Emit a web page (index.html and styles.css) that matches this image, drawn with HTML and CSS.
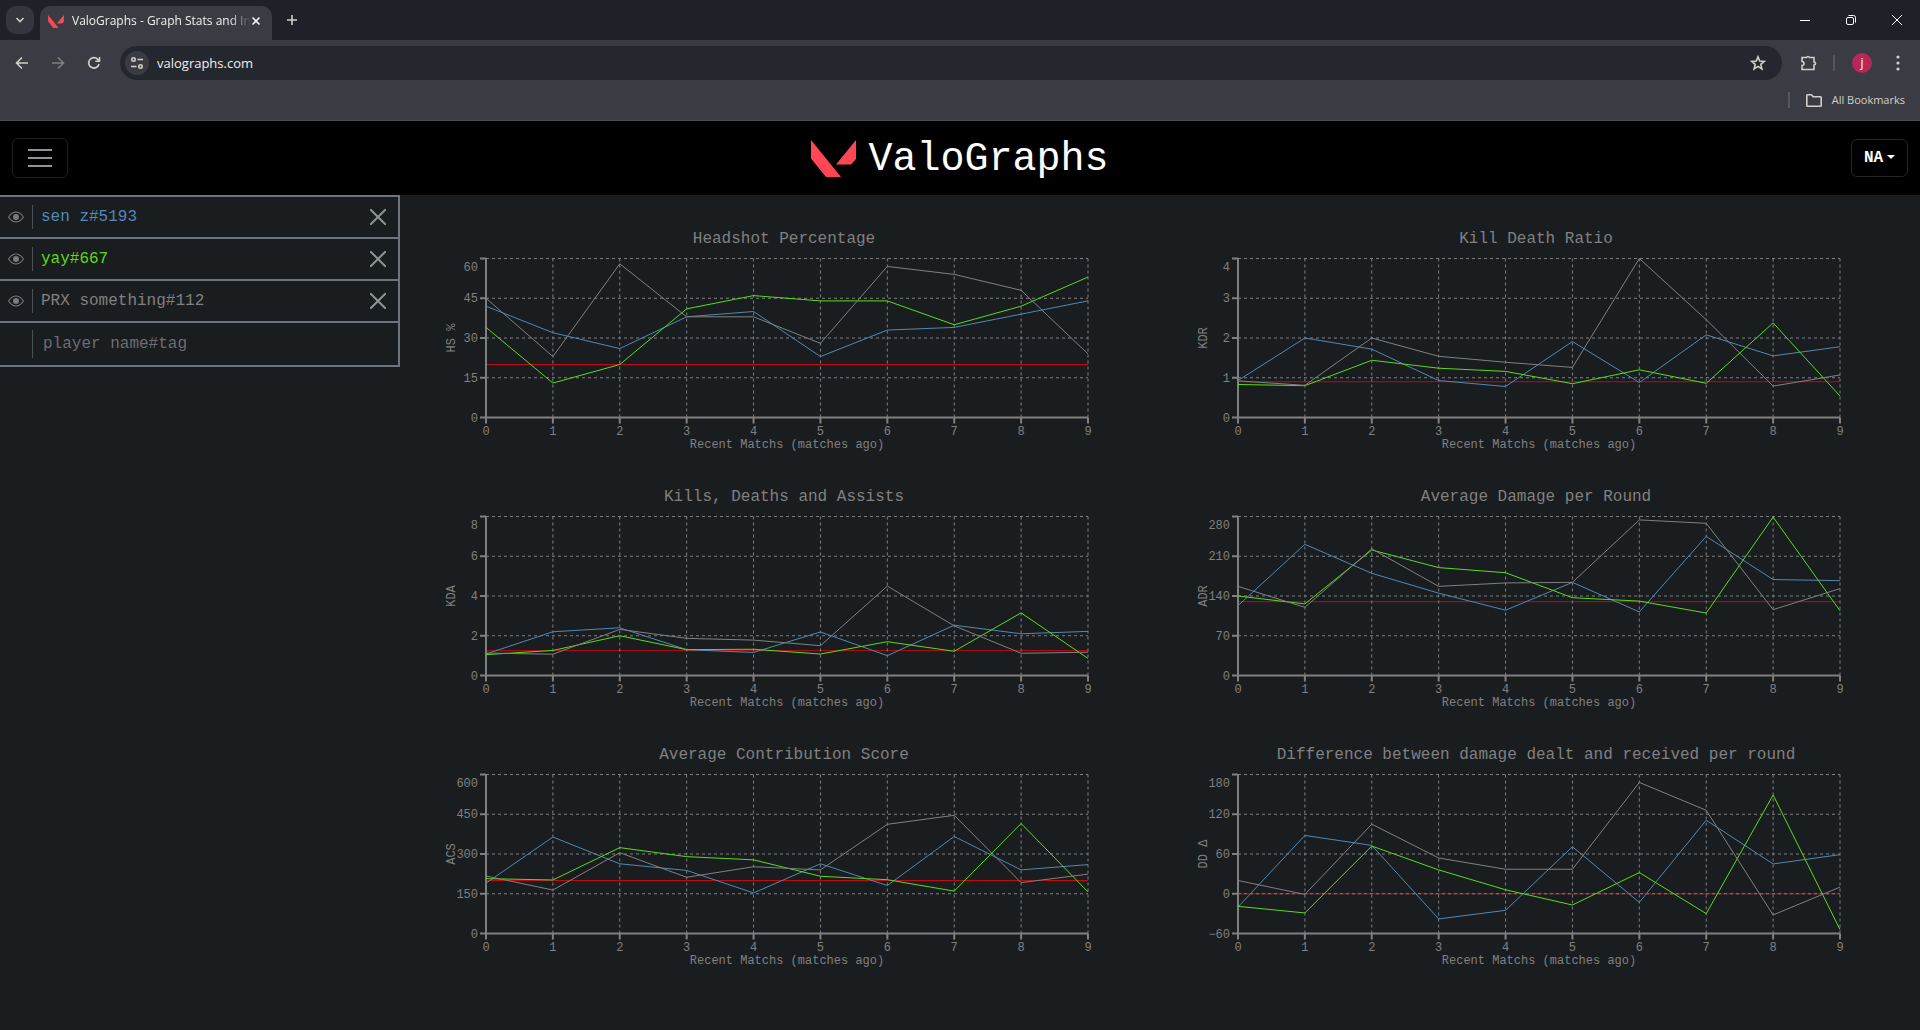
FILE: index.html
```html
<!DOCTYPE html>
<html lang="en">
<head>
<meta charset="utf-8">
<title>ValoGraphs - Graph Stats and Insights</title>
<link rel="stylesheet" href="styles.css">
</head>
<body>
<div class="browser">
  <div class="tabstrip">
    <button class="tab-search" aria-label="Search tabs"><svg width="10" height="6" viewBox="0 0 10 6"><path d="M1.5 1l3.5 3.500 3.500-3.500" class="line"/></svg></button>
    <div class="tab">
      <svg width="16" height="13" viewBox="0 0 45 37" class="mark"><path d="M0 0L30 37H15L0 18.500zM45 0V19L40 24.500H25z"/></svg>
      <span class="tab-title">ValoGraphs - Graph Stats and In</span>
      <button class="bare close" aria-label="Close tab"><svg width="10" height="10" viewBox="0 0 10 10"><path d="M1.500 1.500l7 7M8.500 1.500l-7 7" class="line"/></svg></button>
    </div>
    <button class="bare new-tab" aria-label="New tab"><svg width="12" height="12" viewBox="0 0 12 12"><path d="M6 1v10M1 6h10" class="line"/></svg></button>
    <div class="window-buttons">
      <button class="bare" aria-label="Minimize"><svg width="10" height="10" viewBox="0 0 10 10"><path d="M0 5.500h10" class="hair"/></svg></button>
      <button class="bare" aria-label="Restore"><svg width="10" height="10" viewBox="0 0 10 10"><rect x=".5" y="2.500" width="7" height="7" rx="1.500" class="hair"/><path d="M2.500.5H7.500a2 2 0 0 1 2 2V7.500" class="hair"/></svg></button>
      <button class="bare" aria-label="Close"><svg width="10" height="10" viewBox="0 0 10 10"><path d="M0 0l10 10M10 0L0 10" class="hair"/></svg></button>
    </div>
  </div>
  <div class="toolbar">
    <button class="bare" aria-label="Back"><svg width="14" height="14" viewBox="0 0 14 14"><path d="M13 7H2M7 1.500L1.500 7 7 12.500" class="line"/></svg></button>
    <button class="bare dim" aria-label="Forward"><svg width="14" height="14" viewBox="0 0 14 14"><path d="M1 7h11M7 1.500L12.500 7 7 12.500" class="line"/></svg></button>
    <button class="bare" aria-label="Reload"><svg width="14" height="14" viewBox="0 0 14 14"><path d="M12 8a5.200 5.200 0 1 1-1.200-4.600L12.500 5M12.500 1v4.200H8.300" class="line"/></svg></button>
    <div class="omnibox">
      <button class="site-info" aria-label="Site information"><svg width="14" height="14" viewBox="0 0 14 14"><circle cx="3.500" cy="3.500" r="1.700" class="line"/><path d="M7.500 3.500H13M1 10.500h5.500" class="line"/><circle cx="10.500" cy="10.500" r="1.700" class="line"/></svg></button>
      <input class="url" aria-label="Address" value="valographs.com">
      <button class="bare" aria-label="Bookmark"><svg width="16" height="16" viewBox="0 0 16 16"><path d="M8 1.800l1.700 4.300 4.600.3-3.500 3 1.100 4.500L8 11.400l-3.900 2.500 1.100-4.500-3.500-3 4.600-.3z" class="line"/></svg></button>
    </div>
    <button class="bare ext" aria-label="Extensions"><svg width="18" height="18" viewBox="0 0 18 18"><path d="M2 3.500h4.500a1.600 1.600 0 0 1 3 0H14V8a1.500 1.500 0 0 1 0 3v4.500H2V11.500a2 2 0 0 0 0-4z" class="line"/></svg></button>
    <span class="bar"></span>
    <button class="avatar" aria-label="Profile">j</button>
    <button class="bare" aria-label="Menu"><svg width="4" height="16" viewBox="0 0 4 16" class="dots"><circle cx="2" cy="2" r="1.600"/><circle cx="2" cy="8" r="1.600"/><circle cx="2" cy="14" r="1.600"/></svg></button>
  </div>
  <div class="bookmarks">
    <span class="bar"></span>
    <button class="bare all-bookmarks"><svg width="16" height="13" viewBox="0 0 16 13"><path d="M.8 11.500V1.500q0-.7.7-.7H5.500L7.200 2.800h7.300q.7 0 .7.700v8q0 .7-.7.700H1.500q-.7 0-.7-.7z" class="line"/></svg>All Bookmarks</button>
  </div>
</div>

<header class="navbar">
  <button class="toggler" aria-label="Toggle navigation"><svg width="30" height="30" viewBox="0 0 30 30"><path d="M3 7h24M3 15h24M3 23h24"/></svg></button>
  <a class="brand" href="#"><svg width="45" height="37" viewBox="0 0 45 37" class="mark"><path d="M0 0L30 37H15L0 18.500zM45 0V19L40 24.500H25z"/></svg><span>ValoGraphs</span></a>
  <button class="region">NA<span class="caret"></span></button>
</header>

<svg class="defs" width="0" height="0">
  <symbol id="eye" viewBox="0 0 16 16"><path d="M16 8s-3-5.500-8-5.500S0 8 0 8s3 5.500 8 5.500S16 8 16 8M1.173 8a13 13 0 0 1 1.660-2.043C4.120 4.668 5.880 3.500 8 3.500s3.879 1.168 5.168 2.457A13 13 0 0 1 14.828 8q-.086.130-.195.288c-.335.480-.830 1.120-1.465 1.755C11.879 11.332 10.119 12.500 8 12.500s-3.879-1.168-5.168-2.457A13 13 0 0 1 1.172 8z"/><circle cx="8" cy="8" r="3"/></symbol>
  <symbol id="cross" viewBox="0 0 16 16"><path d="M0 0l16 16M16 0L0 16"/></symbol>
</svg>

<div class="layout">
  <aside class="players">
    <div class="player">
      <button class="bare" aria-label="Toggle sen z"><svg class="eye" width="16" height="16"><use href="#eye"/></svg></button>
      <span class="name blue">sen z#5193</span>
      <button class="bare" aria-label="Remove sen z"><svg class="cross" width="16" height="16"><use href="#cross"/></svg></button>
    </div>
    <div class="player">
      <button class="bare" aria-label="Toggle yay"><svg class="eye" width="16" height="16"><use href="#eye"/></svg></button>
      <span class="name green">yay#667</span>
      <button class="bare" aria-label="Remove yay"><svg class="cross" width="16" height="16"><use href="#cross"/></svg></button>
    </div>
    <div class="player">
      <button class="bare" aria-label="Toggle PRX something"><svg class="eye" width="16" height="16"><use href="#eye"/></svg></button>
      <span class="name grey">PRX something#112</span>
      <button class="bare" aria-label="Remove PRX something"><svg class="cross" width="16" height="16"><use href="#cross"/></svg></button>
    </div>
    <div class="player add">
      <input class="name" aria-label="Player name and tag" placeholder="player name#tag">
    </div>
  </aside>
  <main class="charts" id="charts"></main>
</div>
<script src="charts.js"></script>
</body>
</html>
```
FILE: styles.css
```css
* { box-sizing: border-box; }

body {
  margin: 0;
  min-height: 100vh;
  background: #1a1d20;
  color: #808080;
  font: 16px/24px "Courier New", "Liberation Mono", monospace;
}

button, input {
  margin: 0;
  padding: 0;
  border: 0;
  background: none;
  color: inherit;
  font: inherit;
  outline: none;
}

svg { display: block; flex-shrink: 0; }
.defs { position: absolute; }
.bare { display: flex; align-items: center; justify-content: center; }
.line { fill: none; stroke: currentColor; stroke-width: 1.6; }
.hair { fill: none; stroke: #fff; stroke-width: 1; }
.mark { fill: #ff4655; }
.dots { fill: currentColor; }

/* Browser window */
.browser {
  background: #3b3c43;
  border-bottom: 1px solid #4c4d50;
  color: #d3cfc8;
  font: 12px/16px "Segoe UI", "Open Sans", "Noto Sans", sans-serif;
}

.tabstrip {
  display: flex;
  align-items: center;
  height: 40px;
  padding-left: 6px;
  background: #1e2128;
}

.tab-search {
  display: flex;
  align-items: center;
  justify-content: center;
  width: 28px;
  height: 28px;
  border-radius: 10px;
  background: #35363d;
}

.tab {
  display: flex;
  align-items: center;
  gap: 8px;
  align-self: flex-end;
  width: 232px;
  height: 34px;
  margin-left: 6px;
  padding: 0 11px 4px 8px;
  border-radius: 10px 10px 0 0;
  background: #3b3c43;
  color: #f1efeb;
}

.tab-title {
  flex: 1;
  white-space: nowrap;
  mask-image: linear-gradient(to right, #000 88%, transparent);
}

.close { margin-left: -8px; }
.new-tab { margin-left: 14px; }
.window-buttons { display: flex; gap: 36px; margin-left: auto; padding-right: 18px; }

.toolbar {
  display: flex;
  align-items: center;
  gap: 22px;
  height: 46px;
  padding: 0 20px 0 15px;
}

.dim { opacity: .45; }

.omnibox {
  display: flex;
  flex: 1;
  align-items: center;
  height: 34px;
  margin-left: -3px;
  padding: 0 16px 0 5px;
  border-radius: 17px;
  background: #25272e;
}

.site-info {
  display: flex;
  align-items: center;
  justify-content: center;
  width: 24px;
  height: 24px;
  border-radius: 12px;
  background: #3b3c43;
}

.url { flex: 1; padding-left: 8px; color: #f1efeb; font-size: 13px; }
.ext { margin: 0 -2px 0 -4px; }
.toolbar .bar { margin: 0 -5px; }
.bar { width: 2px; height: 16px; background: #55565b; }

.avatar {
  width: 20px;
  height: 20px;
  margin-right: 2px;
  border-radius: 10px;
  background: #b8275a;
  color: #fff;
}

.bookmarks {
  display: flex;
  align-items: center;
  justify-content: flex-end;
  gap: 16px;
  height: 34px;
  padding: 0 15px 6px 0;
}

.all-bookmarks { gap: 10px; font-size: 11px; }

/* Site header */
.navbar {
  display: grid;
  grid-template-columns: 1fr auto 1fr;
  align-items: center;
  height: 74px;
  padding: 0 12px;
  background: #000;
}

.toggler {
  display: flex;
  align-items: center;
  justify-content: center;
  width: 56px;
  height: 40px;
  border: 1px solid #1c1e1f;
  border-radius: 6px;
}

.toggler path { stroke: #8b9595; stroke-width: 2; }

.brand {
  display: flex;
  align-items: center;
  gap: 12px;
  color: #fff;
  font-size: 40px;
  line-height: 48px;
  text-decoration: none;
}

.brand span { padding-top: 4px; }

.region {
  display: flex;
  align-items: center;
  justify-content: center;
  gap: 4px;
  justify-self: end;
  width: 57px;
  height: 38px;
  border: 1px solid #212529;
  border-radius: 6px;
  color: #fff;
  font-weight: bold;
}

.caret { margin-bottom: 2px; border: 4px solid transparent; border-top-color: #fff; border-bottom: 0; }

/* Player list and charts */
.layout { display: grid; grid-template-columns: 400px 1fr; align-items: start; }

.players { border: 2px solid #6c757d; border-left: 0; }

.player {
  display: flex;
  align-items: center;
  gap: 8px;
  height: 42px;
  padding: 0 12px 0 8px;
  border-bottom: 2px solid #6c757d;
}

.player.add { border-bottom: 0; padding-left: 32px; }
.name { flex: 1; height: 24px; padding-left: 8px; border-left: 1px solid #4b5053; }
.add .name { height: 28px; padding-left: 10px; }
.name::placeholder { color: #6a6e72; opacity: 1; }
.eye { fill: #757b7e; }
.cross { stroke: #8b9595; stroke-width: 2; }
.blue { color: #5288b8; }
.green { color: #5cdb15; }
.grey { color: #808080; }

.charts {
  display: grid;
  grid-template-columns: 1fr 1fr;
  row-gap: 22px;
  min-width: 0;
  padding: 30px 8px 0;
}

.chart { min-width: 0; margin: 0; }
.chart h2 { margin: 0; padding-top: 4px; font-size: 16px; font-weight: normal; line-height: 20px; text-align: center; }
.chart svg { width: 100%; height: 212px; overflow: visible; }
.chart text { fill: #808080; font-size: 12px; }
.end { text-anchor: end; }
.middle { text-anchor: middle; }
.grid { stroke: #808080; stroke-dasharray: 3 3; fill: none; }
.axis { stroke: #808080; stroke-width: 2; fill: none; }
.series { fill: none; stroke-width: 1; }
.s-blue { stroke: #5288b0; }
.s-green { stroke: #5cdb15; }
.s-grey { stroke: #808080; }
.average { stroke: #c00a0e; }
```
FILE: charts.js
```js
const charts = [
  { title: "Headshot Percentage", unit: "HS %", ticks: [0, 15, 30, 45, 60], average: 20,
    blue: [42, 32, 26, 38, 40, 23, 33, 34, 39, 44],
    green: [34, 13, 20, 41, 46, 44, 44, 35, 42, 53],
    grey: [45, 23, 58, 38, 38, 28, 57, 54, 48, 24] },
  { title: "Kill Death Ratio", unit: "KDR", ticks: [0, 1, 2, 3, 4], average: 0.9,
    blue: [0.93, 2, 1.72, 0.93, 0.78, 1.91, 0.88, 2.08, 1.55, 1.78],
    green: [0.83, 0.8, 1.44, 1.24, 1.16, 0.85, 1.2, 0.86, 2.38, 0.54],
    grey: [0.92, 0.81, 2, 1.54, 1.39, 1.26, 4, 2.46, 0.79, 1.07] },
  { title: "Kills, Deaths and Assists", unit: "KDA", ticks: [0, 2, 4, 6, 8], average: 1.25,
    blue: [1.08, 2.2, 2.4, 1.3, 1.16, 2.19, 1, 2.53, 2.1, 2.22],
    green: [1.05, 1.26, 2, 1.3, 1.32, 1.08, 1.7, 1.22, 3.15, 0.86],
    grey: [1.13, 1.07, 2.32, 1.87, 1.78, 1.5, 4.5, 2.5, 1.12, 1.17] },
  { title: "Average Damage per Round", unit: "ADR", ticks: [0, 70, 140, 210, 280], average: 130,
    blue: [123, 231, 180, 145, 115, 164, 112, 245, 169, 167],
    green: [140, 126, 221, 190, 181, 137, 131, 110, 279, 114],
    grey: [157, 120, 223, 157, 163, 164, 274, 268, 116, 153] },
  { title: "Average Contribution Score", unit: "ACS", ticks: [0, 150, 300, 450, 600], average: 200,
    blue: [190, 364, 263, 238, 153, 263, 181, 366, 240, 260],
    green: [207, 202, 324, 290, 278, 216, 203, 160, 415, 157],
    grey: [217, 164, 305, 212, 252, 240, 412, 446, 192, 224] },
  { title: "Difference between damage dealt and received per round", unit: "DD Δ",
    ticks: [-60, 0, 60, 120, 180], average: 0,
    blue: [-20, 88, 73, -38, -25, 71, -13, 111, 45, 59],
    green: [-19, -29, 72, 36, 6, -17, 32, -30, 149, -54],
    grey: [20, -1, 105, 54, 37, 37, 168, 126, -32, 10] }
];

const margin = { left: 78, right: 72, top: 9.5 };
const plotHeight = 159;
const host = document.getElementById("charts");

function plot(chart, width) {
  const left = margin.left, right = width - margin.right;
  const top = margin.top, bottom = top + plotHeight;
  const min = chart.ticks[0], max = chart.ticks[chart.ticks.length - 1];
  const x = i => left + (right - left) * i / 9;
  const y = v => bottom - (v - min) / (max - min) * plotHeight;
  const middle = (left + right) / 2, centre = (top + bottom) / 2;
  let out = `<path class="average" d="M${left} ${y(chart.average)}H${right}"/>`;
  let axes = `<path class="axis" d="M${left} ${top}V${bottom}H${right}"/>`;
  for (const t of chart.ticks) {
    const drop = t === max ? 12 : 4;
    out += `<path class="grid" d="M${left} ${y(t)}H${right}"/>`;
    axes += `<path class="axis" d="M${left - 6} ${y(t)}H${left}"/>`;
    axes += `<text class="end" x="${left - 8}" y="${y(t) + drop}">${String(t).replace("-", "−")}</text>`;
  }
  for (let i = 0; i < 10; i++) {
    out += `<path class="grid" d="M${x(i)} ${top}V${bottom}"/>`;
    axes += `<path class="axis" d="M${x(i)} ${bottom}v6"/>`;
    axes += `<text class="middle" x="${x(i)}" y="${bottom + 17}">${i}</text>`;
  }
  out += axes;
  for (const s of ["blue", "green", "grey"]) {
    out += `<polyline class="series s-${s}" points="${chart[s].map((v, i) => x(i) + "," + y(v)).join(" ")}"/>`;
  }
  out += `<text class="middle" x="${middle}" y="${bottom + 30}">Recent Matchs (matches ago)</text>`;
  out += `<text class="middle" transform="translate(${left - 31} ${centre}) rotate(-90)">${chart.unit}</text>`;
  return out;
}

host.innerHTML = charts.map(c => `<section class="chart"><h2>${c.title}</h2><svg></svg></section>`).join("");

function draw() {
  host.querySelectorAll("svg").forEach((svg, i) => {
    svg.innerHTML = plot(charts[i], svg.clientWidth || svg.getBoundingClientRect().width);
  });
}

draw();
window.addEventListener("resize", draw);
```
